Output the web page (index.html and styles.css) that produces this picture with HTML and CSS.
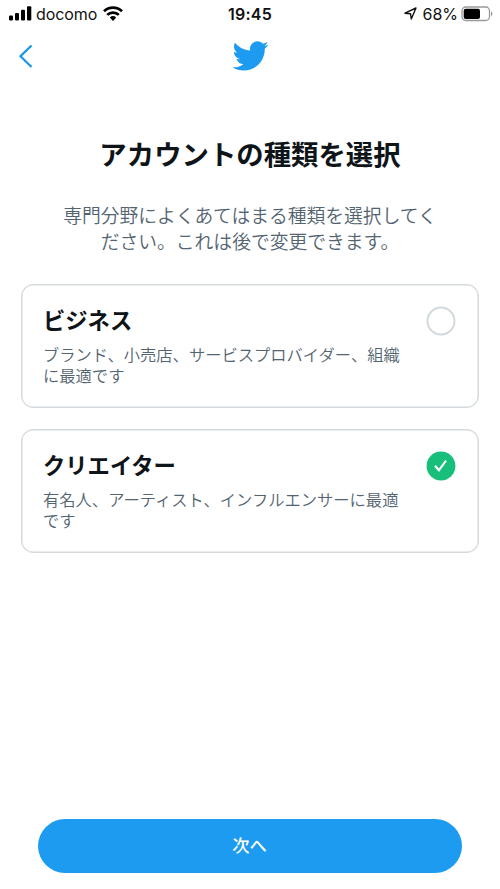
FILE: index.html
```html
<!DOCTYPE html>
<html lang="ja">
<head>
<meta charset="utf-8">
<title>アカウントの種類を選択</title>
<link rel="stylesheet" href="styles.css">
</head>
<body>
<div class="screen">
  <div class="status">
    <div class="status-left">
      <svg class="signal" width="23" height="15" viewBox="0 0 23 15"><rect x="0" y="9.5" width="4" height="5" rx="1.1"/><rect x="6" y="7" width="4" height="7.5" rx="1.1"/><rect x="12" y="3.8" width="4" height="10.7" rx="1.1"/><rect x="18" y="0.2" width="4.3" height="14.3" rx="1.1"/></svg>
      <span class="carrier">docomo</span>
      <svg class="wifi" width="20" height="15" viewBox="0 0 20 15" fill="none" stroke="#000" stroke-width="2.7"><path d="M1 5.2a13 13 0 0 1 18 0M4.2 8.9a8.3 8.3 0 0 1 11.6 0"/><path d="M6.8 11.6a4.7 4.7 0 0 1 6.4 0L10 15z" fill="#000" stroke="none"/></svg>
    </div>
    <span class="time">19:45</span>
    <div class="status-right">
      <svg width="13" height="13" viewBox="0 0 13 13" fill="none" stroke="#111" stroke-width="1.4" stroke-linejoin="round"><path d="M1 6.2 12 1 7.3 12 6.5 6.7z"/></svg>
      <span class="percent">68%</span>
      <svg class="battery" width="32" height="16" viewBox="0 0 32 16"><rect x="1" y="1" width="27.5" height="13.5" rx="3.8" fill="none" stroke="#999" stroke-width="1.3"/><rect x="2.7" y="2.7" width="16.3" height="10.2" rx="2"/><path d="M30 5.3q1.4.8 1.4 2.5T30 10.3z" fill="#999"/></svg>
    </div>
  </div>
  <header class="nav">
    <svg class="back" width="15" height="24" viewBox="0 0 15 24" fill="none" stroke="#1d95ea" stroke-width="2.3"><path d="M12.5 1.5 1.5 12.2 12.5 23"/></svg>
    <svg class="bird" width="38" height="38" viewBox="0 0 24 24" fill="#1d9bf0"><path d="M23.643 4.937c-.835.37-1.732.62-2.675.733.962-.576 1.7-1.49 2.048-2.578-.9.534-1.897.922-2.958 1.13-.85-.904-2.06-1.47-3.4-1.47-2.572 0-4.658 2.086-4.658 4.66 0 .364.042.718.12 1.06-3.873-.195-7.304-2.05-9.602-4.868-.4.69-.63 1.49-.63 2.342 0 1.616.823 3.043 2.072 3.878-.764-.025-1.482-.234-2.11-.583v.06c0 2.257 1.605 4.14 3.737 4.568-.392.106-.803.162-1.227.162-.3 0-.593-.028-.877-.082.593 1.85 2.313 3.198 4.352 3.234-1.595 1.25-3.604 1.995-5.786 1.995-.376 0-.747-.022-1.112-.065 2.062 1.323 4.51 2.093 7.14 2.093 8.57 0 13.255-7.098 13.255-13.254 0-.2-.005-.402-.014-.602.91-.658 1.7-1.477 2.323-2.41z"/></svg>
  </header>
  <main>
    <h1>アカウントの種類を選択</h1>
    <p class="intro">専門分野によくあてはまる種類を選択してく<br>ださい。これは後で変更できます。</p>
    <div class="cards">
      <section class="card">
        <div class="copy">
          <h2>ビジネス</h2>
          <p>ブランド、小売店、サービスプロバイダー、組織<br>に最適です</p>
        </div>
        <svg class="radio" width="30" height="30" viewBox="0 0 30 30"><circle cx="15" cy="15" r="13.5" fill="none" stroke="#d1d9dd" stroke-width="1.9"/></svg>
      </section>
      <section class="card">
        <div class="copy">
          <h2>クリエイター</h2>
          <p>有名人、アーティスト、インフルエンサーに最適<br>です</p>
        </div>
        <svg class="radio" width="30" height="30" viewBox="0 0 30 30"><circle cx="15" cy="15" r="14.4" fill="#17bf7b"/><path d="M9 14.8 12.9 19.3 20 9.6" fill="none" stroke="#fff" stroke-width="2.1"/></svg>
      </section>
    </div>
  </main>
  <button class="next">次へ</button>
</div>
</body>
</html>
```
FILE: styles.css
```css
* { box-sizing: border-box; }
body { margin: 0; background: #fff; font-family: "Noto Sans CJK JP", sans-serif; }
h1, h2, p { margin: 0; white-space: nowrap; }
svg { display: block; flex: none; }
.screen { width: 500px; height: 889px; display: flex; flex-direction: column; overflow: hidden; }
.status { height: 27px; display: grid; grid-template-columns: 1fr auto 1fr; align-items: center; padding: 0 7px 0 9px; font-family: Inter, sans-serif; font-size: 16px; color: #111; }
.status-left, .status-right { display: flex; align-items: center; }
.status-right { justify-content: flex-end; }
.signal { margin-right: 4px; }
.carrier { letter-spacing: -0.1px; margin-right: 6px; }
.time { font-weight: 600; letter-spacing: 0.2px; margin-right: 2px; }
.percent { margin: 0 3px 0 5px; }
.nav { height: 57px; display: grid; grid-template-columns: 1fr auto 1fr; align-items: center; padding: 0 19px; }
.bird { grid-column: 2; }
main { flex: 1; }
h1 { margin-top: 49px; text-align: center; font-size: 27.4px; line-height: 40px; font-weight: 700; color: #0f1419; }
.intro { margin-top: 29px; text-align: center; font-size: 18.8px; line-height: 25.5px; font-weight: 350; color: #536471; }
.cards { display: flex; flex-direction: column; gap: 21px; margin: 31px 21px 0; }
.card { height: 124px; border: 1px solid #d3d9dd; box-shadow: inset 0 0 0 0.5px #d3d9dd; border-radius: 12px; display: flex; justify-content: space-between; padding: 19px 22px 0 21px; }
h2 { font-size: 22.3px; line-height: 30px; font-weight: 700; color: #0f1419; }
.copy p { margin-top: 10px; font-size: 16.3px; line-height: 20.5px; font-weight: 350; color: #536471; }
.radio { margin-top: 2px; }
.next { width: 424px; height: 54px; margin: 0 auto 16px 38px; border: 0; border-radius: 27px; background: #1d9bf0; color: #fff; font: 500 17.3px/52px "Noto Sans CJK JP", sans-serif; padding: 0 1px 2px 0; }
```
